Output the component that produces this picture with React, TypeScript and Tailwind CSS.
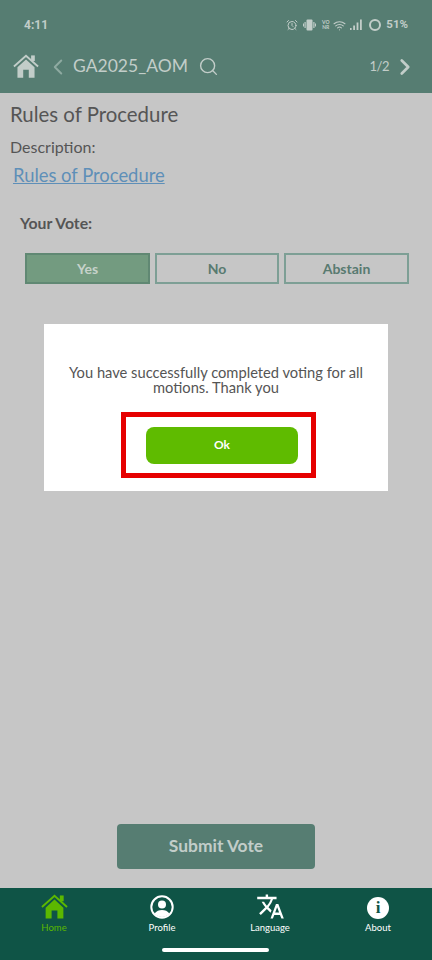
import { ChevronLeft, ChevronRight, Search, AlarmClock, Wifi } from "lucide-react";
import { MdTranslate } from "react-icons/md";

function HomeIcon({ size, color }: { size: number; color: string }) {
  return (
    <svg width={size} height={size * 0.93} viewBox="0 0 28 26" fill={color}>
      <path d="M1 13.5 14 1.8l13 11.7" fill="none" stroke={color} strokeWidth="2" />
      <rect x="19.5" y="1.5" width="4" height="6" />
      <path d="M4.8 14.2 14 5.8l9.2 8.4V25.5H17V17h-6v8.5H4.8z" />
    </svg>
  );
}

function SignalBars() {
  return (
    <svg width="12" height="12" viewBox="0 0 12 12" fill="#c2cdc9">
      <rect x="0" y="9" width="1.6" height="2" />
      <rect x="3.2" y="6.5" width="1.8" height="4.5" />
      <rect x="6.6" y="3.5" width="1.8" height="7.5" />
      <rect x="10" y="0.5" width="1.8" height="10.5" />
    </svg>
  );
}

function VibrateIcon() {
  return (
    <svg width="13" height="12" viewBox="0 0 13 12" fill="#c2cdc9">
      <rect x="3.5" y="0.5" width="6" height="11" rx="1" />
      <rect x="1.5" y="3" width="1.2" height="6" />
      <rect x="10.3" y="3" width="1.2" height="6" />
      <rect x="0" y="4.5" width="1" height="3" />
      <rect x="12" y="4.5" width="1" height="3" />
    </svg>
  );
}

function ProfileIcon() {
  return (
    <svg width="24" height="24" viewBox="0 0 24 24">
      <circle cx="12" cy="12" r="10.7" fill="none" stroke="#fff" strokeWidth="2" />
      <circle cx="12" cy="9.4" r="4" fill="#fff" />
      <path d="M4.6 18.6C6.4 15.8 9 14.9 12 14.9s5.6.9 7.4 3.7C17.6 20.9 15 22 12 22s-5.6-1.1-7.4-3.4z" fill="#fff" />
    </svg>
  );
}

function NavItem({ icon, label, active }: { icon: React.ReactNode; label: string; active?: boolean }) {
  return (
    <div className="flex w-[108px] flex-col items-center">
      <div className="flex h-[25px] items-end justify-center">{icon}</div>
      <span className={`mt-[3px] text-[9.5px] leading-[12px] ${active ? "text-[#5cb800]" : "text-white"}`}>{label}</span>
    </div>
  );
}

export default function App() {
  return (
    <div className="relative flex h-[960px] w-[432px] flex-col overflow-hidden bg-[#c6c6c6] font-['Lato',sans-serif]">
      {/* Status bar + header */}
      <header className="h-[93px] bg-[#567d72] text-[#c2cdc9]">
        <div className="flex h-[50px] items-center justify-between pl-[24px] pr-[24px]">
          <span className="font-['Roboto',sans-serif] text-[12px] font-bold">4:11</span>
          <div className="flex items-center">
            <AlarmClock size={12} strokeWidth={2} />
            <span className="ml-[5px]">
              <VibrateIcon />
            </span>
            <span className="ml-[5px] w-[9px] text-center text-[5px] font-bold leading-[5px]">
              VO
              <br />
              NR
            </span>
            <Wifi size={13} strokeWidth={2} className="ml-[3px]" />
            <span className="ml-[4px]">
              <SignalBars />
            </span>
            <span className="ml-[7px] h-[12px] w-[12px] rounded-full border-[2px] border-[#c2cdc9]" />
            <span className="ml-[5px] font-['Roboto',sans-serif] text-[11.5px] font-bold">51%</span>
          </div>
        </div>
        <div className="flex h-[33px] items-center pl-[13px] pr-[19px]">
          <HomeIcon size={26} color="#c2cdc9" />
          <ChevronLeft size={26} strokeWidth={1.8} className="ml-[6px] mr-[-2px] text-[#8eaaa1]" />
          <span className="ml-[4px] text-[17.5px]">GA2025_AOM</span>
          <Search size={21} strokeWidth={1.6} className="ml-[10px]" />
          <span className="ml-auto text-[13px] tracking-[-0.5px]">1/2</span>
          <ChevronRight size={26} strokeWidth={2.5} className="ml-[3px] mr-[-5px]" />
        </div>
      </header>

      {/* Motion details */}
      <main className="flex-1 px-[10px] text-[#555]">
        <h1 className="mt-[8px] text-[20.4px] leading-[26px]">Rules of Procedure</h1>
        <p className="mt-[9px] text-[16px] leading-[22px]">Description:</p>
        <a className="ml-[3px] mt-[5px] block text-[18.4px] leading-[24px] text-[#5e8fb8] underline">Rules of Procedure</a>
        <p className="ml-[10px] mt-[26px] text-[15.8px] font-bold leading-[20px]">Your Vote:</p>
        <div className="ml-[15px] mt-[20px] flex gap-[5px] text-[14px]">
          <button className="h-[31px] w-[125px] border-2 border-[#608873] bg-[#739b80] font-bold text-[#c6d2ca]">Yes</button>
          <button className="h-[31px] w-[124px] border-2 border-[#7d9f95] font-bold text-[#587a70]">No</button>
          <button className="h-[31px] w-[125px] border-2 border-[#7d9f95] font-bold text-[#587a70]">Abstain</button>
        </div>
      </main>

      <div className="flex justify-center pb-[19px]">
        <button className="h-[45px] w-[198px] rounded-[4px] bg-[#567d72] text-[17.4px] font-bold text-[#c2cdc9]">Submit Vote</button>
      </div>

      {/* Bottom nav */}
      <nav className="relative flex h-[72px] justify-between bg-[#0f5446] pt-[6px]">
        <NavItem active label="Home" icon={<HomeIcon size={27} color="#5cb800" />} />
        <NavItem label="Profile" icon={<ProfileIcon />} />
        <NavItem label="Language" icon={<MdTranslate size={29} className="mb-[-2px] text-white" />} />
        <NavItem
          label="About"
          icon={
            <div className="flex h-[22px] w-[22px] items-center justify-center rounded-full bg-white font-['Liberation_Serif',serif] text-[17px] font-bold text-[#0f5446]">
              i
            </div>
          }
        />
        <div className="absolute bottom-[8px] left-[162px] h-[4px] w-[107px] rounded-full bg-white" />
      </nav>

      {/* Confirmation dialog */}
      <div className="absolute left-[44px] top-[324px] flex h-[167px] w-[344px] flex-col items-center bg-white pt-[41px]">
        <p className="w-[320px] text-center text-[14.7px] leading-[15px] text-[#555]">
          You have successfully completed voting for all motions. Thank you
        </p>
        <div className="ml-[5px] mt-[17px] flex h-[66px] w-[195px] items-center justify-center border-[5px] border-[#e60000] pl-[7px]">
          <button className="h-[37px] w-[152px] rounded-[8px] bg-[#5fbb00] text-[12px] font-bold text-white">Ok</button>
        </div>
      </div>
    </div>
  );
}
